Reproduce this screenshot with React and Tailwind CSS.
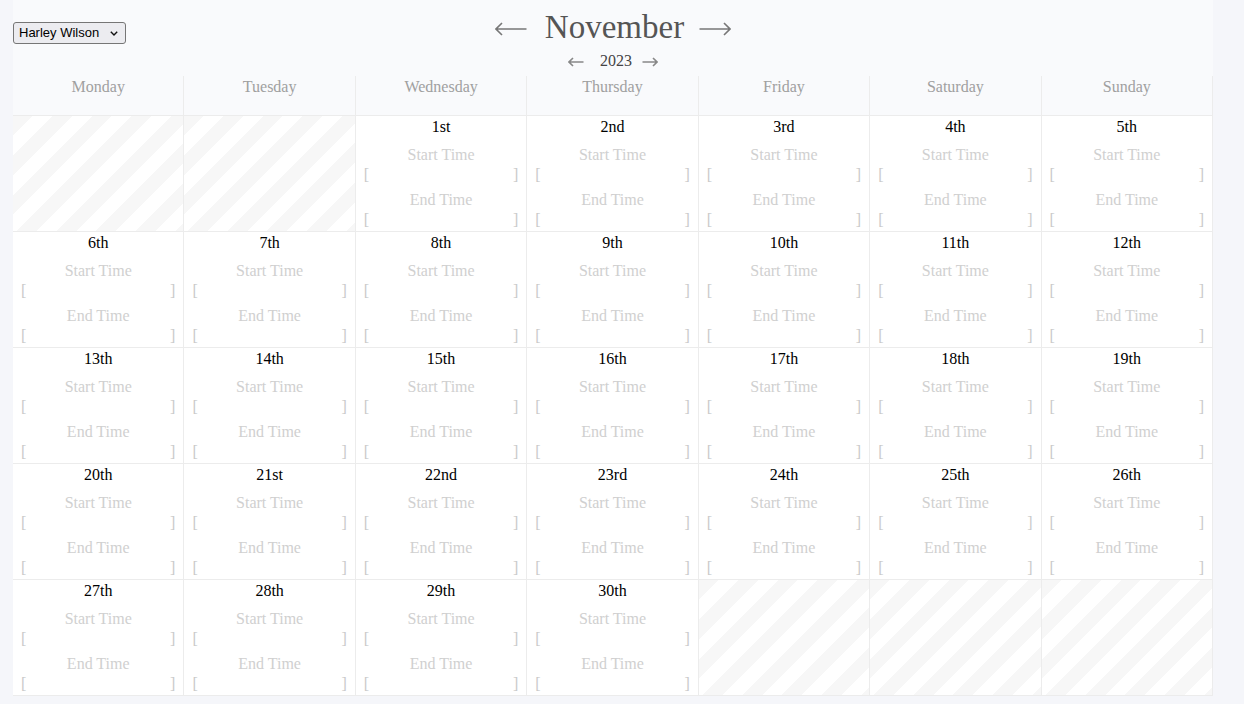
import { useState } from "react";

const DAYS = ["Monday", "Tuesday", "Wednesday", "Thursday", "Friday", "Saturday", "Sunday"];

const MONTHS = [
  "January", "February", "March", "April", "May", "June",
  "July", "August", "September", "October", "November", "December"
];

const ordinal = (n) => {
  if (n % 100 >= 11 && n % 100 <= 13) return n + "th";
  if (n % 10 === 1) return n + "st";
  if (n % 10 === 2) return n + "nd";
  if (n % 10 === 3) return n + "rd";
  return n + "th";
};

/* ================= BUILD MONTH GRID ================= */

const buildCells = (year, month) => {
  const first = new Date(year, month, 1);
  const offset = (first.getDay() + 6) % 7;
  const total = new Date(year, month + 1, 0).getDate();
  const cells = [];
  for (let i = 0; i < offset; i++) cells.push(null);
  for (let d = 1; d <= total; d++) cells.push(d);
  while (cells.length % 7 !== 0) cells.push(null);
  return cells;
};

/* thin serif-like arrow, drawn since Liberation Serif has no arrow glyphs */
function Arrow({ dir, width, stroke, head }) {
  const w = width;
  const h = head * 2 + 2;
  const mid = h / 2;
  const d =
    dir === "left"
      ? `M${w - 0.5} ${mid}H1 M${head + 1} ${mid - head}L1 ${mid}L${head + 1} ${mid + head}`
      : `M0.5 ${mid}H${w - 1} M${w - head - 1} ${mid - head}L${w - 1} ${mid}L${w - head - 1} ${mid + head}`;
  return (
    <svg width={w} height={h} viewBox={`0 0 ${w} ${h}`} className="block">
      <path d={d} fill="none" stroke={stroke} strokeWidth="1.6" />
    </svg>
  );
}

function TimeField({ label }) {
  return (
    <div>
      <div className="text-center text-[#d0d0d0] leading-[20px]">{label}</div>
      <div className="flex justify-between px-2 text-[#cacaca] leading-[20px]">
        <span>[</span>
        <span>]</span>
      </div>
    </div>
  );
}

function DayCell({ day }) {
  if (!day) {
    return (
      <div className="h-[116px] border-r border-b border-[#ececec] bg-[repeating-linear-gradient(135deg,#f7f7f7_0px,#f7f7f7_14px,#ffffff_14px,#ffffff_28px)]" />
    );
  }

  return (
    <div className="h-[116px] pt-[1px] border-r border-b border-[#ececec] bg-white">
      <div className="text-center text-black leading-[20px]">{ordinal(day)}</div>
      <div className="mt-[8px]">
        <TimeField label="Start Time" />
      </div>
      <div className="mt-[5px]">
        <TimeField label="End Time" />
      </div>
    </div>
  );
}

export default function App() {

  const [year, setYear] = useState(2023);
  const [month, setMonth] = useState(10);
  const [person, setPerson] = useState("Harley Wilson");

  const cells = buildCells(year, month);

  const prevMonth = () => setMonth((m) => (m + 11) % 12);
  const nextMonth = () => setMonth((m) => (m + 1) % 12);

  return (
    <div className="min-h-[704px] bg-[#f5f6fa] font-['Liberation_Serif',serif] text-[16px]">

      <div className="ml-[13px] w-[1200px] bg-[#f9fafc]">

        {/* HEADER */}

        <div className="relative h-[76px]">

          <div className="absolute left-0 top-[22px]">
            <select
              value={person}
              onChange={(e) => setPerson(e.target.value)}
              className="appearance-none block h-[22px] w-[113px] pl-[5px] pr-[20px] border border-[#767676] rounded-[3px] bg-[#ececf0] text-[13px] text-black font-['Liberation_Sans',sans-serif]"
            >
              <option>Harley Wilson</option>
              <option>Jordan Blake</option>
              <option>Morgan Reyes</option>
            </select>
            <svg
              className="absolute right-[8px] top-[9px] pointer-events-none"
              width="8"
              height="5"
              viewBox="0 0 8 5"
            >
              <path d="M0.8 0.8l3.2 3.2L7.2 0.8" fill="none" stroke="#111" strokeWidth="1.4" />
            </svg>
          </div>

          <div className="flex flex-col items-center pt-[5px]">
            <div className="flex items-center text-[33px] leading-[44px]">
              <button onClick={prevMonth} className="mr-[18px] mt-[3px]">
                <Arrow dir="left" width={32} stroke="#777" head={6} />
              </button>
              <span className="text-[#555]">{MONTHS[month]}</span>
              <button onClick={nextMonth} className="ml-[15px] mt-[3px]">
                <Arrow dir="right" width={32} stroke="#777" head={6} />
              </button>
            </div>
            <div className="mt-[2px] flex items-center leading-[20px]">
              <button onClick={() => setYear(year - 1)} className="mr-[16px] mt-[2px]">
                <Arrow dir="left" width={16} stroke="#888" head={4} />
              </button>
              <span className="text-[#444]">{year}</span>
              <button onClick={() => setYear(year + 1)} className="ml-[10px] mt-[2px]">
                <Arrow dir="right" width={16} stroke="#888" head={4} />
              </button>
            </div>
          </div>

        </div>

        {/* DAY NAMES */}

        <div className="grid grid-cols-7">
          {DAYS.map((d) => (
            <div
              key={d}
              className="h-[40px] pt-[1px] border-r border-b border-[#ececec] text-center text-[#a0a0a0] leading-[20px]"
            >
              {d}
            </div>
          ))}
        </div>

        {/* CELLS */}

        <div className="grid grid-cols-7">
          {cells.map((day, i) => (
            <DayCell key={i} day={day} />
          ))}
        </div>

      </div>

    </div>
  );

}
